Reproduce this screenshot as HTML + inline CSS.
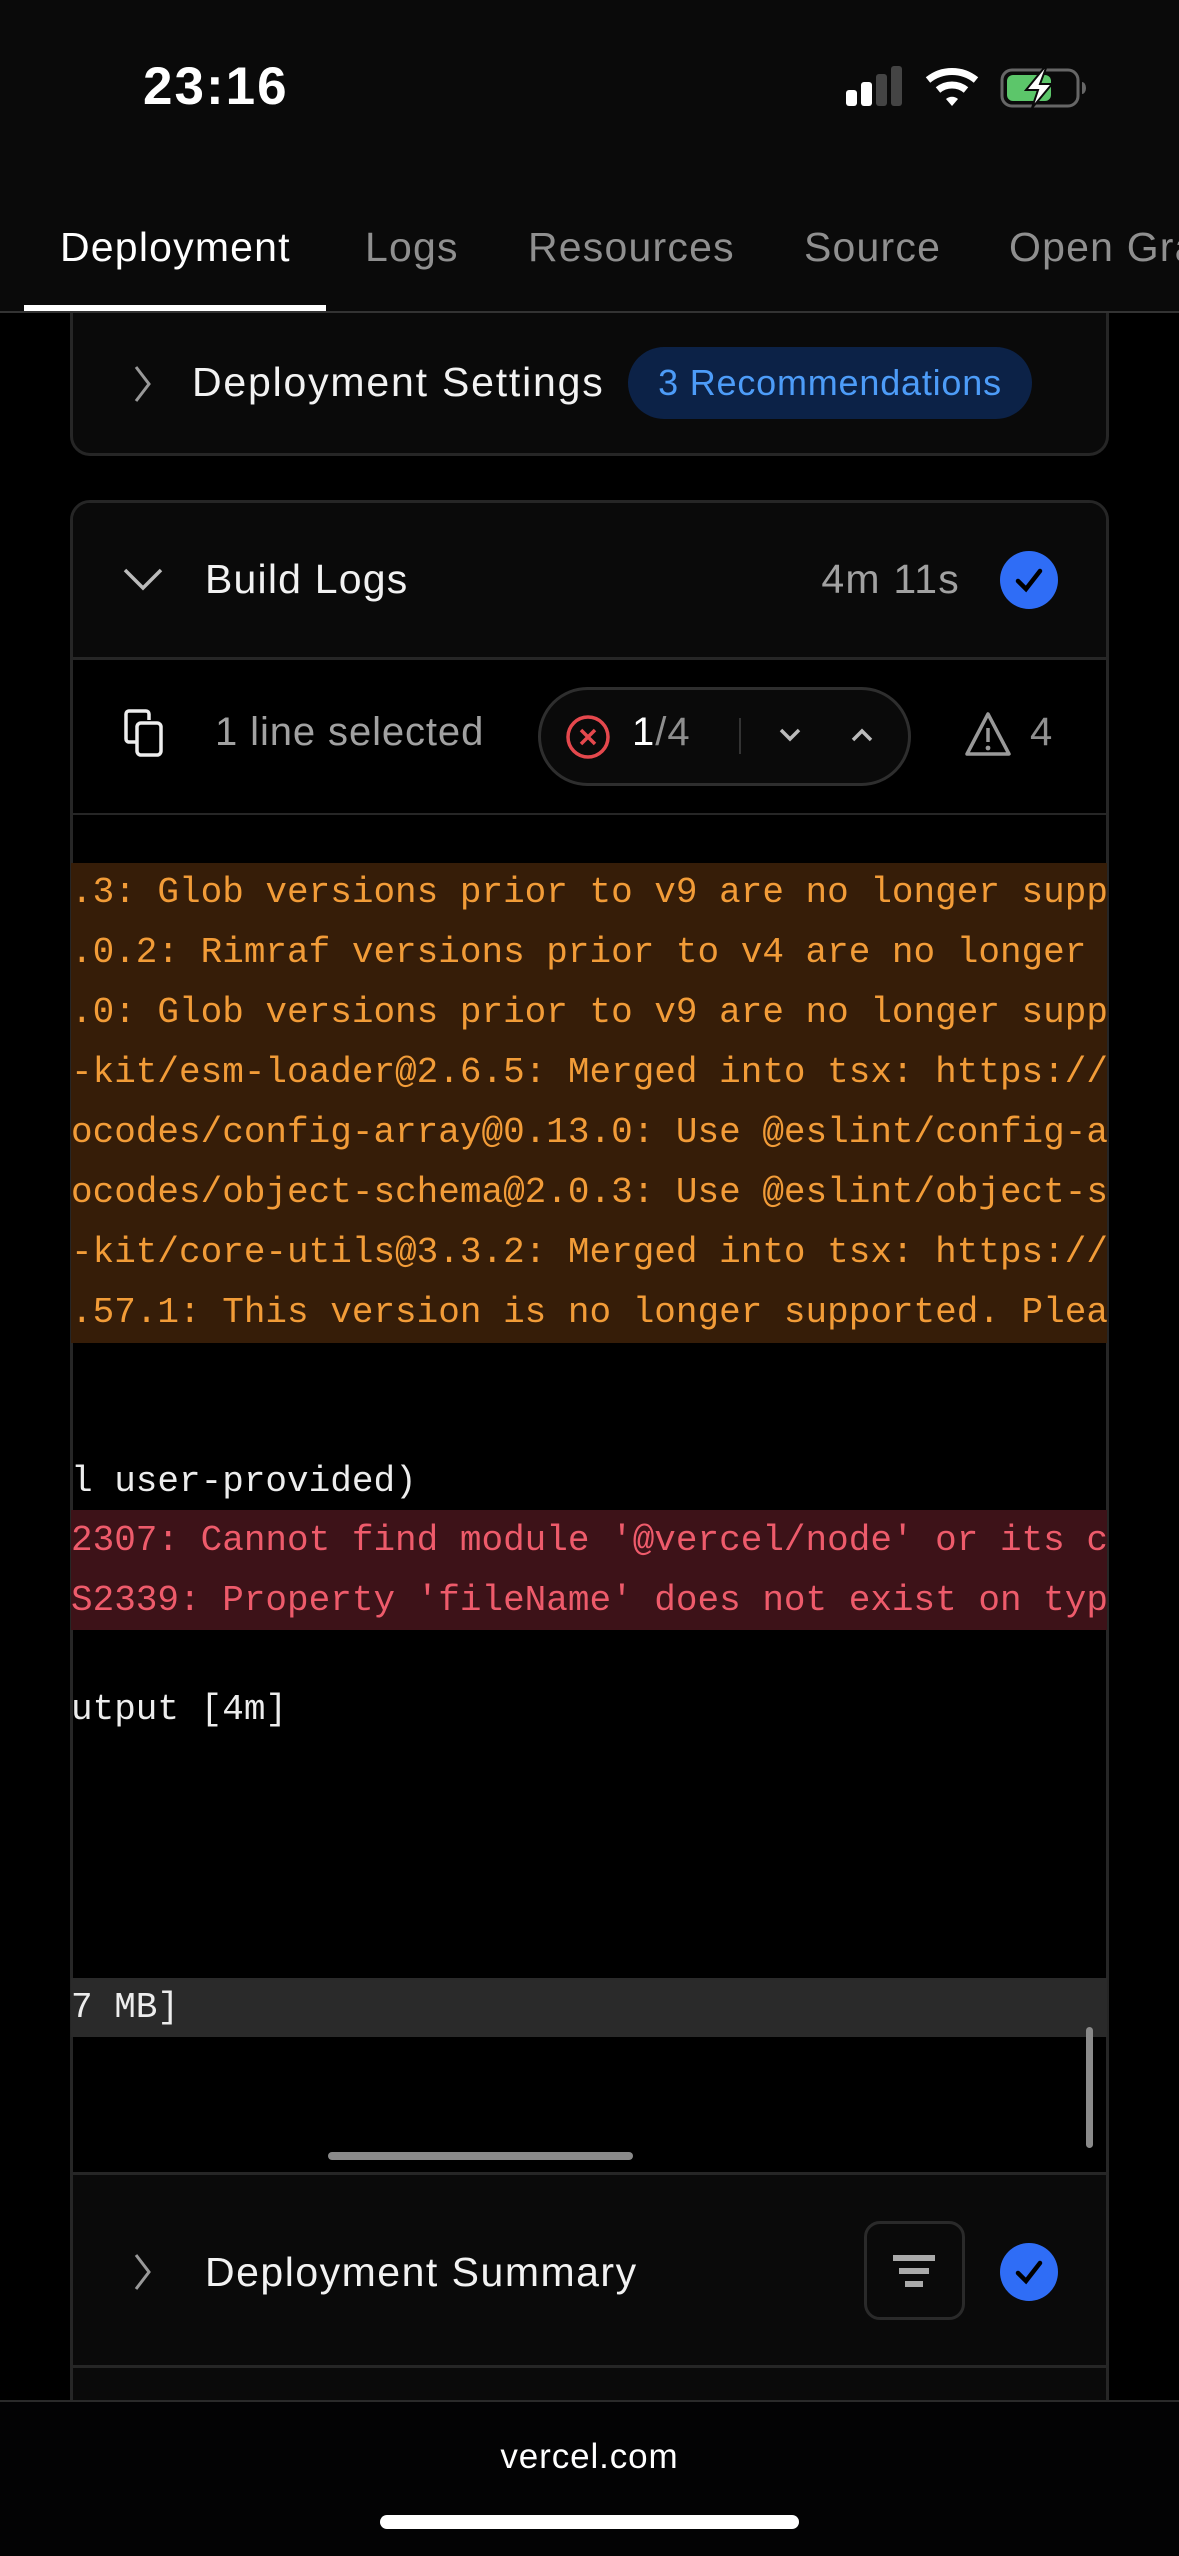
<!DOCTYPE html>
<html><head><meta charset="utf-8"><style>
*{margin:0;padding:0;box-sizing:border-box}
html,body{overflow:hidden}
body{width:1179px;height:2556px;background:#000;position:relative;font-family:"Liberation Sans",sans-serif;color:#ededed}
.abs{position:absolute}
.top{left:0;top:0;width:1179px;height:313px;background:#0a0a0a;border-bottom:2px solid #333;z-index:5;overflow:hidden}
.time{left:143px;top:56px;font-size:53px;font-weight:bold;color:#fff;letter-spacing:2px}
.tab{top:224px;font-size:41px;color:#8f8f8f;letter-spacing:1.2px;white-space:nowrap}
.card{left:70px;width:1039px;border:3px solid #262626;border-radius:20px;background:#0a0a0a}
.mono{font-family:"Liberation Mono",monospace;font-size:36px;white-space:pre;line-height:60px;height:60px;overflow:hidden;width:1036px;left:71px}
.or{color:#f29c38}
.rd{color:#ee5b6b}
.wt{color:#ededed}
.check{width:58px;height:58px;border-radius:50%;background:#2f6df6}
.h{font-size:41px;color:#f2f2f2}
</style></head><body>
<div class="abs top">
 <div class="abs time">23:16</div>
 <svg class="abs" style="left:846px;top:66px" width="240" height="44" viewBox="0 0 240 44">
  <rect x="0" y="24" width="11" height="16" rx="3" fill="#fff"/>
  <rect x="15" y="16" width="11" height="24" rx="3" fill="#fff"/>
  <rect x="30" y="8" width="11" height="32" rx="3" fill="#444"/>
  <rect x="45" y="0" width="11" height="40" rx="3" fill="#444"/>
  <path d="M82 14 A38 38 0 0 1 130 14" stroke="#fff" stroke-width="7" fill="none"/>
  <path d="M92 24 A22 22 0 0 1 120 24" stroke="#fff" stroke-width="7" fill="none"/>
  <path d="M100 33 L106 40 L112 33 A9 9 0 0 0 100 33Z" fill="#fff"/>
  <rect x="156" y="4" width="76" height="36" rx="10" stroke="#666" stroke-width="3" fill="none"/>
  <rect x="161" y="9" width="44" height="26" rx="6" fill="#5cc66a"/>
  <path d="M236 16 v12 a4 6 0 0 0 0-12z" fill="#666"/>
  <path d="M198 2 L180 24 L192 24 L186 42 L206 18 L194 18 L200 2Z" fill="#fff" stroke="#0a0a0a" stroke-width="2"/>
 </svg>
 <div class="abs tab" style="left:60px;color:#fff">Deployment</div>
 <div class="abs tab" style="left:365px">Logs</div>
 <div class="abs tab" style="left:528px">Resources</div>
 <div class="abs tab" style="left:804px">Source</div>
 <div class="abs tab" style="left:1009px;width:170px;overflow:hidden">Open Graph</div>
 <div class="abs" style="left:24px;top:305px;width:302px;height:6px;background:#fff"></div>
</div>

<div class="abs card" style="top:260px;height:196px"></div>
<svg class="abs" style="left:132px;top:364px" width="22" height="40"><path d="M4 3 L17 20 L4 37" stroke="#999" stroke-width="3" fill="none"/></svg>
<div class="abs h" style="left:192px;top:359px;letter-spacing:1.8px">Deployment Settings</div>
<div class="abs" style="left:628px;top:347px;width:404px;height:72px;border-radius:36px;background:#0c2247;color:#4d9cf8;font-size:36px;letter-spacing:0.8px;line-height:72px;text-align:center">3 Recommendations</div>

<div class="abs card" style="top:500px;height:1920px;background:#000;overflow:hidden">
 <div class="abs" style="left:0;top:0;width:1033px;height:157px;background:#0a0a0a;border-bottom:3px solid #262626"></div>
 <div class="abs" style="left:0;top:1669px;width:1033px;height:196px;background:#0a0a0a;border-top:3px solid #262626;border-bottom:3px solid #262626"></div>
 <div class="abs" style="left:0;top:1865px;width:1033px;height:50px;background:#0a0a0a"></div>
 <div class="abs" style="left:0;top:310px;width:1033px;height:2px;background:#262626"></div>
</div>
<svg class="abs" style="left:122px;top:566px" width="42" height="26"><path d="M3 4 L21 22 L39 4" stroke="#bbb" stroke-width="3.5" fill="none"/></svg>
<div class="abs h" style="left:205px;top:556px;letter-spacing:1.2px">Build Logs</div>
<div class="abs" style="right:219px;top:556px;font-size:41px;letter-spacing:1.2px;color:#a1a1a1">4m 11s</div>
<div class="abs check" style="left:1000px;top:551px"></div>
<svg class="abs" style="left:1000px;top:551px" width="58" height="58"><path d="M18 30 L26 38 L40 20" stroke="#000" stroke-width="4.5" fill="none" stroke-linecap="round"/></svg>

<svg class="abs" style="left:122px;top:708px" width="46" height="50"><path d="M14 34 H7 a3 3 0 0 1-3-3 V6 a3 3 0 0 1 3-3 H24 a3 3 0 0 1 3 3 V12" stroke="#eee" stroke-width="3.5" fill="none"/><rect x="15" y="15" width="24" height="32" rx="4" stroke="#eee" stroke-width="3.5" fill="none"/></svg>
<div class="abs" style="left:215px;top:710px;font-size:40px;letter-spacing:0.9px;color:#a1a1a1">1 line selected</div>
<div class="abs" style="left:538px;top:687px;width:373px;height:99px;border-radius:50px;border:3px solid #2e2e2e;background:#0a0a0a"></div>
<svg class="abs" style="left:565px;top:714px" width="46" height="46"><circle cx="23" cy="23" r="20" stroke="#e5484d" stroke-width="3.5" fill="none"/><path d="M16 16 L30 30 M30 16 L16 30" stroke="#e5484d" stroke-width="3.5"/></svg>
<div class="abs" style="left:632px;top:710px;font-size:40px;letter-spacing:1px;color:#fff">1<span style="color:#8f8f8f">/4</span></div>
<div class="abs" style="left:739px;top:718px;width:2px;height:36px;background:#333"></div>
<svg class="abs" style="left:778px;top:726px" width="24" height="18"><path d="M3 4 L12 13 L21 4" stroke="#bbb" stroke-width="3.5" fill="none"/></svg>
<svg class="abs" style="left:850px;top:726px" width="24" height="18"><path d="M3 14 L12 5 L21 14" stroke="#bbb" stroke-width="3.5" fill="none"/></svg>
<svg class="abs" style="left:963px;top:710px" width="50" height="48"><path d="M25 4 L46 44 H4 Z" stroke="#999" stroke-width="3.5" fill="none" stroke-linejoin="round"/><path d="M25 18 V32" stroke="#999" stroke-width="3.5"/><circle cx="25" cy="38" r="2.4" fill="#999"/></svg>
<div class="abs" style="left:1030px;top:710px;font-size:40px;color:#8f8f8f">4</div>

<div class="abs" style="left:71px;top:863px;width:1036px;height:480px;background:#361d08"></div>
<div class="abs mono or" style="top:863px">.3: Glob versions prior to v9 are no longer supported</div>
<div class="abs mono or" style="top:923px">.0.2: Rimraf versions prior to v4 are no longer supported</div>
<div class="abs mono or" style="top:983px">.0: Glob versions prior to v9 are no longer supported</div>
<div class="abs mono or" style="top:1043px">-kit/esm-loader@2.6.5: Merged into tsx: https://tsx.is</div>
<div class="abs mono or" style="top:1103px">ocodes/config-array@0.13.0: Use @eslint/config-array</div>
<div class="abs mono or" style="top:1163px">ocodes/object-schema@2.0.3: Use @eslint/object-schema</div>
<div class="abs mono or" style="top:1223px">-kit/core-utils@3.3.2: Merged into tsx: https://tsx.is</div>
<div class="abs mono or" style="top:1283px">.57.1: This version is no longer supported. Please</div>
<div class="abs mono wt" style="top:1452px">l user-provided)</div>
<div class="abs" style="left:71px;top:1510px;width:1036px;height:120px;background:#3d1218"></div>
<div class="abs mono rd" style="top:1511px">2307: Cannot find module '@vercel/node' or its corresponding</div>
<div class="abs mono rd" style="top:1571px">S2339: Property 'fileName' does not exist on type</div>
<div class="abs mono wt" style="top:1680px">utput [4m]</div>
<div class="abs" style="left:71px;top:1978px;width:1036px;height:59px;background:#2a2a2a"></div>
<div class="abs mono wt" style="top:1978px">7 MB]</div>
<div class="abs" style="left:1086px;top:2027px;width:7px;height:121px;border-radius:4px;background:#8a8a8a"></div>
<div class="abs" style="left:328px;top:2152px;width:305px;height:8px;border-radius:4px;background:#8a8a8a"></div>

<svg class="abs" style="left:132px;top:2252px" width="22" height="40"><path d="M4 3 L17 20 L4 37" stroke="#999" stroke-width="3" fill="none"/></svg>
<div class="abs h" style="left:205px;top:2249px;letter-spacing:1.5px">Deployment Summary</div>
<div class="abs" style="left:864px;top:2221px;width:101px;height:99px;border-radius:16px;border:3px solid #2a2a2a;background:#0a0a0a"></div>
<div class="abs" style="left:893px;top:2255px;width:42px;height:6px;background:#aaa"></div>
<div class="abs" style="left:899px;top:2268px;width:30px;height:6px;background:#aaa"></div>
<div class="abs" style="left:905px;top:2281px;width:18px;height:6px;background:#aaa"></div>
<div class="abs check" style="left:1000px;top:2243px"></div>
<svg class="abs" style="left:1000px;top:2243px" width="58" height="58"><path d="M18 30 L26 38 L40 20" stroke="#000" stroke-width="4.5" fill="none" stroke-linecap="round"/></svg>

<div class="abs" style="left:0;top:2400px;width:1179px;height:156px;background:#030304;border-top:2px solid #2a2a2a"></div>
<div class="abs" style="left:0;top:2437px;width:1179px;text-align:center;font-size:35px;letter-spacing:0.9px;color:#fff">vercel.com</div>
<div class="abs" style="left:380px;top:2515px;width:419px;height:14px;border-radius:7px;background:#fff"></div>
</body></html>
